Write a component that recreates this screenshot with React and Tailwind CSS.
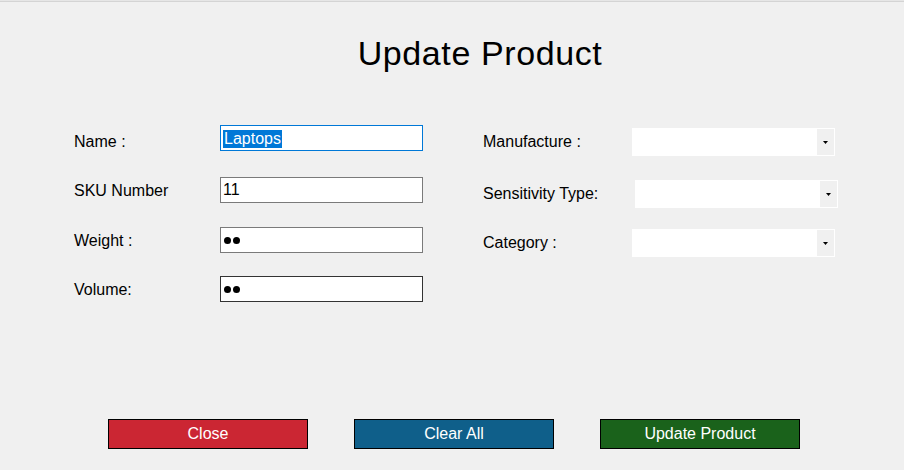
import React from 'react';

const font = { fontFamily: '"Liberation Sans", Arial, sans-serif' };

function TextBox({ children, focused, dark }) {
    const border = focused ? 'border-[#0078d7]' : dark ? 'border-[#333333]' : 'border-[#7a7a7a]';
    return (
        <div className={`w-[203px] h-[26px] bg-white border ${border} flex items-center pl-[2px] text-[16px] leading-[18px] text-black`}>
            {children}
        </div>
    );
}

function Dots() {
    return (
        <div className="flex items-center gap-[2px] pl-[1px] pt-[1px]">
            <span className="w-[7px] h-[7px] rounded-full bg-black" />
            <span className="w-[7px] h-[7px] rounded-full bg-black" />
        </div>
    );
}

function ComboBox({ className = '' }) {
    return (
        <div className={`w-[203px] h-[28px] bg-white border border-white flex ${className}`}>
            <div className="flex-1" />
            <div className="w-[17px] h-full bg-[#f0f0f0] flex items-center justify-center">
                <svg width="5" height="3" viewBox="0 0 5 3">
                    <polygon points="0,0 5,0 2.5,3" fill="#000" />
                </svg>
            </div>
        </div>
    );
}

function Button({ label, color }) {
    return (
        <button className={`w-[200px] h-[30px] border border-black ${color} text-white text-[16px] flex items-center justify-center`}>
            {label}
        </button>
    );
}

export default function App() {
    return (
        <div className="w-[904px] h-[470px] bg-[#f0f0f0] flex flex-col text-black overflow-hidden" style={font}>
            {/* window top edge */}
            <div className="h-px bg-[#e6e6e6]" />
            <div className="h-px bg-[#d4d4d4]" />

            <h1 className="mt-[32px] pl-[56px] text-center text-[34px] leading-[38px] tracking-[0.6px] font-normal">
                Update Product
            </h1>

            {/* ── Form ── */}
            <div className="flex mt-[53px] pl-[74px] gap-[60px]">
                <div className="flex flex-col w-[349px]">
                    <div className="flex items-start">
                        <span className="w-[146px] pt-[8px] text-[16px] leading-[18px]">Name :</span>
                        <TextBox focused>
                            <span className="bg-[#0078d7] text-white leading-[18px] pl-px pr-px mt-[2px]">Laptops</span>
                        </TextBox>
                    </div>
                    <div className="flex items-start mt-[26px]">
                        <span className="w-[146px] pt-[5px] text-[16px] leading-[18px]">SKU Number</span>
                        <TextBox>11</TextBox>
                    </div>
                    <div className="flex items-start mt-[24px]">
                        <span className="w-[146px] pt-[5px] text-[16px] leading-[18px]">Weight :</span>
                        <TextBox><Dots /></TextBox>
                    </div>
                    <div className="flex items-start mt-[23px]">
                        <span className="w-[146px] pt-[5px] text-[16px] leading-[18px]">Volume:</span>
                        <TextBox dark><Dots /></TextBox>
                    </div>
                </div>

                <div className="flex flex-col pt-[3px]">
                    <div className="flex items-start">
                        <span className="w-[149px] pt-[5px] text-[16px] leading-[18px]">Manufacture :</span>
                        <ComboBox />
                    </div>
                    <div className="flex items-start mt-[24px]">
                        <span className="w-[149px] pt-[5px] text-[16px] leading-[18px]">Sensitivity Type:</span>
                        <ComboBox className="ml-[3px]" />
                    </div>
                    <div className="flex items-start mt-[21px]">
                        <span className="w-[149px] pt-[5px] text-[16px] leading-[18px]">Category :</span>
                        <ComboBox />
                    </div>
                </div>
            </div>

            {/* ── Actions ── */}
            <div className="mt-auto mb-[21px] flex pl-[108px] gap-[46px]">
                <Button label="Close" color="bg-[#cb2633]" />
                <Button label="Clear All" color="bg-[#0f5f8a]" />
                <Button label="Update Product" color="bg-[#1a621b]" />
            </div>
        </div>
    );
}
